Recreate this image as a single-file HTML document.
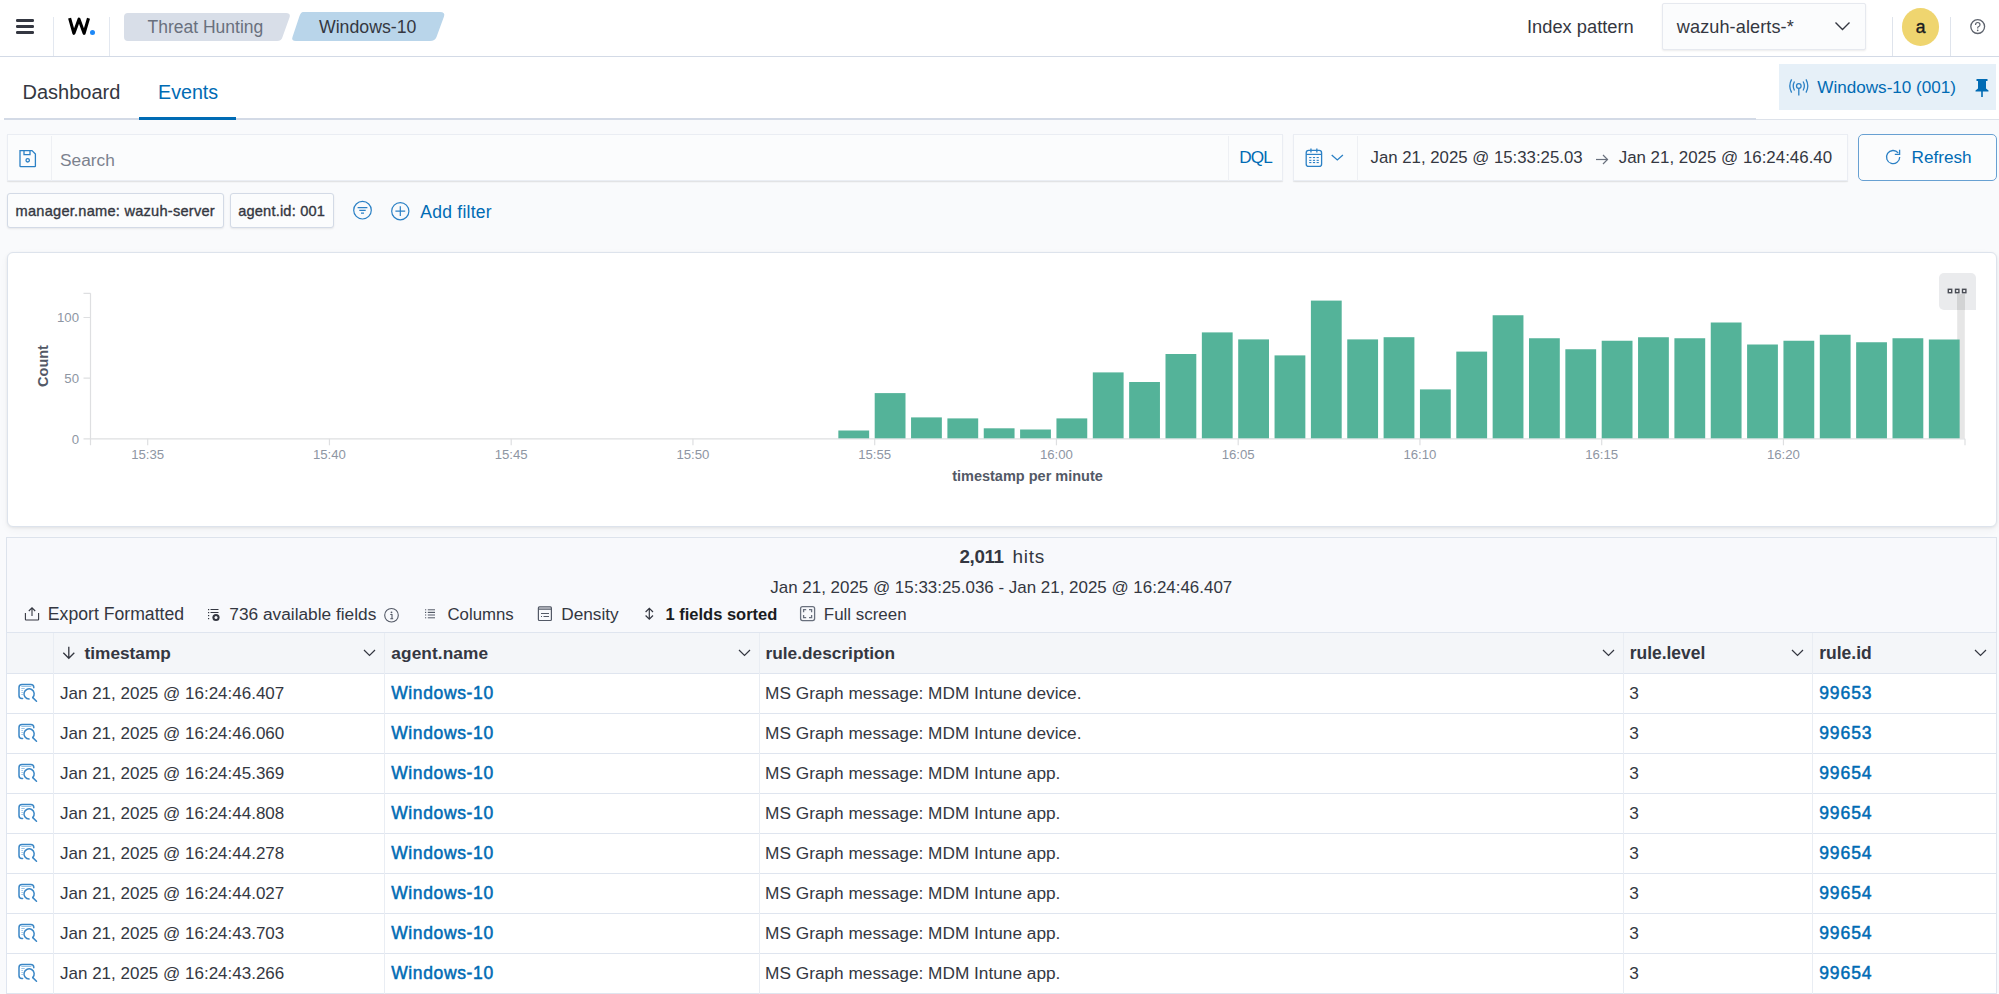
<!DOCTYPE html>
<html><head><meta charset="utf-8"><title>Wazuh - Threat Hunting</title>
<style>
html,body{margin:0;padding:0;}
body{width:1999px;height:994px;overflow:hidden;position:relative;background:#fff;font-family:"Liberation Sans",sans-serif;}
.t{position:absolute;white-space:nowrap;line-height:1;}
.b{position:absolute;}
svg.b{overflow:visible;}
</style></head><body>
<div class="b" style="left:0px;top:0px;width:1999px;height:56px;background:#fff;"></div>
<div class="b" style="left:0px;top:56px;width:1999px;height:1px;background:#d3dae6;"></div>
<div class="b" style="left:15.8px;top:19.3px;width:18.6px;height:2.4px;background:#343741;border-radius:1.2px;"></div>
<div class="b" style="left:15.8px;top:25.3px;width:18.6px;height:2.4px;background:#343741;border-radius:1.2px;"></div>
<div class="b" style="left:15.8px;top:31.2px;width:18.6px;height:2.4px;background:#343741;border-radius:1.2px;"></div>
<div class="b" style="left:53px;top:17px;width:1px;height:39px;background:#e3e8f0;"></div>
<div class="b" style="left:109px;top:17px;width:1px;height:39px;background:#e3e8f0;"></div>
<svg class="b" style="left:0;top:0" width="100" height="56"><path d="M69.6,18.2 L73.9,33.3 L79,19.2 L84.1,33.3 L88.5,18.2" fill="none" stroke="#000" stroke-width="3.1" stroke-linejoin="round"/></svg>
<div class="b" style="left:89.9px;top:29.6px;width:5.5px;height:5.5px;border-radius:50%;background:#1e88f7;"></div>
<svg class="b" style="left:0;top:0" width="460" height="56"><path d="M128,13 L286,13 Q291,13 289.5,17.5 L282.5,37 Q281.5,41 277,41 L128,41 Q124,41 124,37 L124,17 Q124,13 128,13 Z" fill="#d8dee8"/><path d="M303,12 L440,12 Q445.5,12 444,16.5 L436.5,37 Q435,41 430,41 L296,41 Q291,41 292.5,37 L299.5,16 Q301,12 303,12 Z" fill="#b9d5ea"/></svg>
<div class="t" style="left:147.50px;top:19.00px;font-size:17.5px;color:#69707d;">Threat Hunting</div>
<div class="t" style="left:319.00px;top:19.00px;font-size:17.7px;color:#343741;">Windows-10</div>
<div class="t" style="left:1527.00px;top:18.00px;font-size:18.3px;color:#343741;">Index pattern</div>
<div class="b" style="left:1662px;top:3.2px;width:203.5px;height:47px;background:#fbfcfd;border:1px solid #e6e9ef;box-shadow:0 1px 2px rgba(0,0,0,.08);box-sizing:border-box;border-radius:2px;"></div>
<div class="t" style="left:1676.80px;top:18.00px;font-size:18.1px;color:#343741;letter-spacing:0.1px;">wazuh-alerts-*</div>
<svg class="b" style="left:1830px;top:18px" width="26" height="18"><path d="M5.5,4.5 L12.5,11.5 L19.5,4.5" fill="none" stroke="#343741" stroke-width="1.4"/></svg>
<div class="b" style="left:1892px;top:17px;width:1.2px;height:39px;background:#dfe4ec;"></div>
<div class="b" style="left:1949.8px;top:17px;width:1.2px;height:39px;background:#dfe4ec;"></div>
<div class="b" style="left:1901.5px;top:7.8px;width:37.8px;height:37.8px;border-radius:50%;background:#efd56f;"></div>
<div class="t" style="left:1915.80px;top:19.00px;font-size:17.5px;color:#1a1c21;-webkit-text-stroke:0.4px #1a1c21;">a</div>
<svg class="b" style="left:1968px;top:17px" width="20" height="20"><circle cx="9.7" cy="9.6" r="6.9" fill="none" stroke="#5e636d" stroke-width="1.3"/><path d="M7.5,8 Q7.5,5.5 9.7,5.5 Q12,5.5 12,7.7 Q12,9.1 10.3,9.8 Q9.7,10.1 9.7,11.4" fill="none" stroke="#5e636d" stroke-width="1.2"/><circle cx="9.7" cy="13.4" r="0.8" fill="#5e636d"/></svg>
<div class="b" style="left:0px;top:57px;width:1999px;height:62px;background:#fff;"></div>
<div class="b" style="left:4px;top:118.2px;width:1752px;height:1.8px;background:#d3dae6;"></div>
<div class="b" style="left:1756px;top:118.8px;width:243px;height:1.2px;background:#dde2ea;"></div>
<div class="t" style="left:22.50px;top:82.00px;font-size:20px;color:#343741;">Dashboard</div>
<div class="t" style="left:158.00px;top:83.00px;font-size:19.7px;color:#006bb4;">Events</div>
<div class="b" style="left:139px;top:117px;width:97px;height:3px;background:#006bb4;"></div>
<div class="b" style="left:1779px;top:63.5px;width:217px;height:46.5px;background:#e6f0f8;"></div>
<svg class="b" style="left:1786px;top:76px" width="26" height="24"><g fill="none" stroke="#2b80c5" stroke-width="1.3"><circle cx="12.8" cy="10" r="2.3"/><path d="M12.8,12.3 V19.5"/><path d="M8.5,5.5 Q6,10 8.5,14.5"/><path d="M17.1,5.5 Q19.6,10 17.1,14.5"/><path d="M5.6,3.4 Q2,10 5.6,16.6"/><path d="M20,3.4 Q23.6,10 20,16.6"/></g></svg>
<div class="t" style="left:1817.30px;top:79.00px;font-size:17.1px;color:#006bb4;">Windows-10 (001)</div>
<svg class="b" style="left:1972px;top:76px" width="20" height="24"><path d="M4.5,3 H15.5 V5 H14 V12.5 L16.5,14.5 V15.5 H3.5 V14.5 L6,12.5 V5 H4.5 Z" fill="#006bb4"/><rect x="9.2" y="15" width="1.6" height="6" fill="#006bb4"/></svg>
<div class="b" style="left:0px;top:120px;width:1999px;height:874px;background:#f9fafc;"></div>
<div class="b" style="left:7px;top:134.3px;width:1275.5px;height:46.5px;background:#fbfcfd;border:1px solid #eaedf3;box-sizing:border-box;box-shadow:0 1px 1px rgba(0,0,0,.06),0 2px 2px -1px rgba(0,0,0,.05);"></div>
<div class="b" style="left:51px;top:135.5px;width:1px;height:45px;background:#eef0f4;"></div>
<svg class="b" style="left:17px;top:148px" width="22" height="22"><g fill="none" stroke="#2b80c5" stroke-width="1.3"><path d="M3,2.6 H15 L18.4,6 V18 Q18.4,18.6 17.8,18.6 H3.6 Q3,18.6 3,18 Z"/><path d="M7,2.6 V6.6 H13 V2.6"/><circle cx="10.7" cy="12.3" r="1.7"/></g></svg>
<div class="t" style="left:60.00px;top:152.00px;font-size:17.3px;color:#7b828e;">Search</div>
<div class="b" style="left:1227.5px;top:135.5px;width:1px;height:45px;background:#eef0f4;"></div>
<div class="t" style="left:1239.30px;top:149.00px;font-size:17.2px;color:#006bb4;letter-spacing:-0.9px;">DQL</div>
<div class="b" style="left:1293px;top:134.3px;width:555px;height:46.5px;background:#fbfcfd;border:1px solid #eaedf3;box-sizing:border-box;box-shadow:0 1px 1px rgba(0,0,0,.06),0 2px 2px -1px rgba(0,0,0,.05);"></div>
<div class="b" style="left:1356.5px;top:135.5px;width:1px;height:45px;background:#eef0f4;"></div>
<svg class="b" style="left:1302px;top:146px" width="24" height="24"><g fill="#2b80c5"><rect x="4.2" y="4.4" width="15.4" height="16" rx="2.5" fill="none" stroke="#2b80c5" stroke-width="1.3"/><rect x="4.2" y="7.8" width="15.4" height="1.2"/><rect x="8.3" y="2.5" width="1.3" height="4"/><rect x="14.2" y="2.5" width="1.3" height="4"/><rect x="7.2" y="11" width="2.2" height="1.1"/><rect x="10.9" y="11" width="2.2" height="1.1"/><rect x="14.6" y="11" width="2.2" height="1.1"/><rect x="7.2" y="13.8" width="2.2" height="1.1"/><rect x="10.9" y="13.8" width="2.2" height="1.1"/><rect x="14.6" y="13.8" width="2.2" height="1.1"/><rect x="7.2" y="16" width="2.2" height="1.1"/><rect x="10.9" y="16" width="2.2" height="1.1"/><rect x="14.6" y="16" width="2.2" height="1.1"/></g></svg>
<svg class="b" style="left:1328px;top:150px" width="18" height="14"><path d="M3.7,5 L9.3,10 L14.9,5" fill="none" stroke="#2b80c5" stroke-width="1.3"/></svg>
<div class="t" style="left:1370.50px;top:150.00px;font-size:16.8px;color:#343741;">Jan 21, 2025 @ 15:33:25.03</div>
<svg class="b" style="left:1593px;top:152px" width="18" height="16"><g fill="none" stroke="#69707d" stroke-width="1.2"><path d="M3,7.5 H14.5"/><path d="M10,3 L14.5,7.5 L10,12"/></g></svg>
<div class="t" style="left:1618.70px;top:150.00px;font-size:16.9px;color:#343741;">Jan 21, 2025 @ 16:24:46.40</div>
<div class="b" style="left:1857.5px;top:134.3px;width:139px;height:47.2px;border:1.8px solid #68a0d2;border-radius:5px;box-sizing:border-box;background:#fbfcfd;"></div>
<svg class="b" style="left:1882px;top:146px" width="22" height="22"><g fill="none" stroke="#2b80c5" stroke-width="1.3"><path d="M16.2,6.9 A6.6,6.6 0 1 0 17.7,11"/><path d="M17.6,3.7 V8.4 H12.8"/></g></svg>
<div class="t" style="left:1911.50px;top:149.00px;font-size:17.2px;color:#006bb4;">Refresh</div>
<div class="b" style="left:7px;top:193.3px;width:217px;height:34.7px;background:#fbfcfd;border:1px solid #d3dae6;border-radius:3px;box-sizing:border-box;box-shadow:0 1px 2px rgba(0,0,0,.08);"></div>
<div class="t" style="left:15.60px;top:204.00px;font-size:14.6px;color:#343741;letter-spacing:0.24px;-webkit-text-stroke:0.35px #343741;">manager.name: wazuh-server</div>
<div class="b" style="left:229.5px;top:193.3px;width:104.5px;height:34.7px;background:#fbfcfd;border:1px solid #d3dae6;border-radius:3px;box-sizing:border-box;box-shadow:0 1px 2px rgba(0,0,0,.08);"></div>
<div class="t" style="left:238.20px;top:204.00px;font-size:14.6px;color:#343741;letter-spacing:0.19px;-webkit-text-stroke:0.35px #343741;">agent.id: 001</div>
<svg class="b" style="left:351px;top:199px" width="24" height="24"><g fill="none" stroke="#2b80c5" stroke-width="1.2"><circle cx="11.5" cy="11.2" r="8.8"/><path d="M6.6,8.6 H16.4 M8.3,11.4 H14.7 M10,14.2 H13"/></g></svg>
<svg class="b" style="left:389px;top:200px" width="24" height="24"><g fill="none" stroke="#2b80c5" stroke-width="1.2"><circle cx="11.3" cy="11.2" r="8.6"/><path d="M6.4,11.2 H16.2 M11.3,6.3 V16.1"/></g></svg>
<div class="t" style="left:420.20px;top:204.00px;font-size:17.5px;color:#006bb4;letter-spacing:0.27px;">Add filter</div>
<div class="b" style="left:6.5px;top:252px;width:1990px;height:274.5px;background:#fff;border:1px solid #dde3ec;border-radius:6px;box-sizing:border-box;box-shadow:0 1px 3px rgba(0,0,0,.07),0 3px 8px rgba(0,0,0,.04);"></div>
<svg class="b" style="left:0;top:0" width="1999" height="994"><g stroke="#dedfe1" stroke-width="1.2" fill="none"><path d="M90.5,293.3 V445.3 M83.5,293.3 H90.5 M83.5,317.5 H90.5 M83.5,378.1 H90.5 M83.5,438.8 H90.5 M90.5,438.8 H1965"/><path d="M147.70,438.8 V445.3"/><path d="M329.45,438.8 V445.3"/><path d="M511.20,438.8 V445.3"/><path d="M692.95,438.8 V445.3"/><path d="M874.70,438.8 V445.3"/><path d="M1056.45,438.8 V445.3"/><path d="M1238.20,438.8 V445.3"/><path d="M1419.95,438.8 V445.3"/><path d="M1601.70,438.8 V445.3"/><path d="M1783.45,438.8 V445.3"/><path d="M1965,438.8 V445.3"/></g><rect x="1957.2" y="309.5" width="7.6" height="129" fill="#e6e6e6"/><g fill="#54b399"><rect x="838.35" y="430.5" width="30.8" height="7.80"/><rect x="874.70" y="393.1" width="30.8" height="45.20"/><rect x="911.05" y="417.4" width="30.8" height="20.90"/><rect x="947.40" y="418.4" width="30.8" height="19.90"/><rect x="983.75" y="428.3" width="30.8" height="10.00"/><rect x="1020.10" y="429.5" width="30.8" height="8.80"/><rect x="1056.45" y="418.4" width="30.8" height="19.90"/><rect x="1092.80" y="372.4" width="30.8" height="65.90"/><rect x="1129.15" y="382" width="30.8" height="56.30"/><rect x="1165.50" y="354" width="30.8" height="84.30"/><rect x="1201.85" y="332.4" width="30.8" height="105.90"/><rect x="1238.20" y="339.4" width="30.8" height="98.90"/><rect x="1274.55" y="355.4" width="30.8" height="82.90"/><rect x="1310.90" y="300.6" width="30.8" height="137.70"/><rect x="1347.25" y="339.4" width="30.8" height="98.90"/><rect x="1383.60" y="337.2" width="30.8" height="101.10"/><rect x="1419.95" y="389.4" width="30.8" height="48.90"/><rect x="1456.30" y="351.6" width="30.8" height="86.70"/><rect x="1492.65" y="315.25" width="30.8" height="123.05"/><rect x="1529.00" y="338.25" width="30.8" height="100.05"/><rect x="1565.35" y="349.25" width="30.8" height="89.05"/><rect x="1601.70" y="340.75" width="30.8" height="97.55"/><rect x="1638.05" y="337.25" width="30.8" height="101.05"/><rect x="1674.40" y="338.25" width="30.8" height="100.05"/><rect x="1710.75" y="322.5" width="30.8" height="115.80"/><rect x="1747.10" y="344.5" width="30.8" height="93.80"/><rect x="1783.45" y="340.75" width="30.8" height="97.55"/><rect x="1819.80" y="334.75" width="30.8" height="103.55"/><rect x="1856.15" y="342.25" width="30.8" height="96.05"/><rect x="1892.50" y="338.25" width="30.8" height="100.05"/><rect x="1928.85" y="339.5" width="30.8" height="98.80"/></g><g font-family="Liberation Sans" font-size="13.2" fill="#8e96a3"><text x="147.70" y="458.7" text-anchor="middle">15:35</text><text x="329.45" y="458.7" text-anchor="middle">15:40</text><text x="511.20" y="458.7" text-anchor="middle">15:45</text><text x="692.95" y="458.7" text-anchor="middle">15:50</text><text x="874.70" y="458.7" text-anchor="middle">15:55</text><text x="1056.45" y="458.7" text-anchor="middle">16:00</text><text x="1238.20" y="458.7" text-anchor="middle">16:05</text><text x="1419.95" y="458.7" text-anchor="middle">16:10</text><text x="1601.70" y="458.7" text-anchor="middle">16:15</text><text x="1783.45" y="458.7" text-anchor="middle">16:20</text><text x="79" y="322.4" text-anchor="end">100</text><text x="79" y="383" text-anchor="end">50</text><text x="79" y="443.6" text-anchor="end">0</text></g><text x="1027.5" y="480.7" text-anchor="middle" font-family="Liberation Sans" font-weight="700" font-size="14.5" fill="#535966">timestamp per minute</text><text transform="translate(47.7,366) rotate(-90)" text-anchor="middle" font-family="Liberation Sans" font-weight="700" font-size="14.5" fill="#535966">Count</text></svg>
<div class="b" style="left:1938.5px;top:272.5px;width:37.5px;height:37px;background:#eaebed;border-radius:5px 5px 0 5px;"></div>
<div class="b" style="left:1957.2px;top:294px;width:7.6px;height:15.5px;background:rgba(0,0,0,0.1);"></div>
<svg class="b" style="left:1944px;top:285px" width="26" height="12"><g fill="none" stroke="#4a4d55" stroke-width="1.4"><rect x="4.3" y="4.3" width="3.4" height="3.4"/><rect x="11.5" y="4.3" width="3.4" height="3.4"/><rect x="18.5" y="4.3" width="3.4" height="3.4"/></g></svg>
<div class="b" style="left:6.0px;top:536.8px;width:1990.5px;height:457.2px;background:#f8f9fc;border:1px solid #dde3ec;border-bottom:none;box-sizing:border-box;"></div>
<div class="t" style="left:959.50px;top:548.00px;font-size:18.8px;color:#343741;font-weight:700;letter-spacing:-0.35px;">2,011</div>
<div class="t" style="left:1012.60px;top:547.00px;font-size:19px;color:#343741;letter-spacing:0.7px;">hits</div>
<div class="t" style="left:770.30px;top:580.00px;font-size:16.95px;color:#343741;">Jan 21, 2025 @ 15:33:25.036 - Jan 21, 2025 @ 16:24:46.407</div>
<svg class="b" style="left:22px;top:604px" width="20" height="20"><g fill="none" stroke="#343741" stroke-width="1.1"><path d="M3.4,9 V15.4 Q3.4,16 4,16 H16 Q16.6,16 16.6,15.4 V9"/><path d="M10,4 V12 M6.8,7 L10,3.8 L13.2,7"/></g></svg>
<div class="t" style="left:47.80px;top:606.00px;font-size:17.65px;color:#343741;">Export Formatted</div>
<svg class="b" style="left:206px;top:606px" width="18" height="18"><g fill="#343741"><rect x="2" y="3" width="1.2" height="1.2"/><rect x="4.5" y="3" width="8" height="1"/><rect x="2" y="6" width="1.2" height="1.2"/><rect x="4.5" y="6" width="8" height="1"/><rect x="2" y="9" width="1.2" height="1.2"/><rect x="2" y="12" width="1.2" height="1.2"/><circle cx="10" cy="11.5" r="3.6"/></g><circle cx="10" cy="11.5" r="1.5" fill="#f8f9fc"/></svg>
<div class="t" style="left:229.30px;top:606.00px;font-size:17.3px;color:#343741;">736 available fields</div>
<svg class="b" style="left:382px;top:606px" width="20" height="20"><g fill="none" stroke="#535966" stroke-width="1.1"><circle cx="9.5" cy="9.25" r="6.8"/></g><circle cx="9.5" cy="6.3" r="0.9" fill="#535966"/><path d="M8.3,8.5 H10 V12.8 M8.3,12.8 H11.2" fill="none" stroke="#535966" stroke-width="1.1"/></svg>
<svg class="b" style="left:424px;top:606px" width="16" height="16"><g fill="#535966"><rect x="1" y="3.3" width="1.2" height="1"/><rect x="3.8" y="3.3" width="7.2" height="1"/><rect x="1" y="5.8" width="1.2" height="1.2"/><rect x="3.8" y="5.8" width="7.2" height="1.2"/><rect x="1" y="8.5" width="1.2" height="1"/><rect x="3.8" y="8.5" width="7.2" height="1"/><rect x="1" y="11.3" width="1.2" height="1"/><rect x="3.8" y="11.3" width="7.2" height="1"/></g></svg>
<div class="t" style="left:447.50px;top:607.00px;font-size:16.8px;color:#343741;">Columns</div>
<svg class="b" style="left:534px;top:603px" width="20" height="20"><g fill="none" stroke="#535966" stroke-width="1.2"><rect x="4.4" y="3.9" width="13" height="13.6" rx="1"/><path d="M4.4,6.2 H17.4 M7,10.5 H15 M7,13.5 H8 M9.5,13.5 H15"/></g></svg>
<div class="t" style="left:561.20px;top:606.00px;font-size:17.25px;color:#343741;">Density</div>
<svg class="b" style="left:641px;top:604px" width="16" height="18"><g fill="none" stroke="#343741" stroke-width="1.2"><path d="M8.3,4.3 V15.2 M4.6,8 L8.3,4.3 L12,8 M4.6,11.5 L8.3,15.2 L12,11.5"/></g></svg>
<div class="t" style="left:665.50px;top:606.00px;font-size:16.5px;color:#1a1c21;font-weight:700;">1 fields sorted</div>
<svg class="b" style="left:797px;top:603px" width="20" height="20"><g fill="none" stroke="#69707d" stroke-width="1.3"><rect x="3.6" y="3.6" width="14" height="14" rx="2"/><path d="M6.6,9.2 V6.6 H9.2 M12,6.6 H14.6 V9.2 M14.6,12 V14.6 H12 M9.2,14.6 H6.6 V12"/></g></svg>
<div class="t" style="left:823.80px;top:607.00px;font-size:16.95px;color:#343741;">Full screen</div>
<div class="b" style="left:6.0px;top:632.5px;width:1989.5px;height:40.5px;background:#f4f6f9;"></div>
<div class="b" style="left:6.0px;top:672.5px;width:1989.5px;height:321.5px;background:#fff;"></div>
<div class="b" style="left:6.0px;top:632.2px;width:1989.5px;height:1.3px;background:#dfe5ef;"></div>
<div class="b" style="left:6.0px;top:672.5px;width:1989.5px;height:1.3px;background:#dfe5ef;"></div>
<div class="b" style="left:6.0px;top:712.5px;width:1989.5px;height:1.3px;background:#dfe5ef;"></div>
<div class="b" style="left:6.0px;top:752.5px;width:1989.5px;height:1.3px;background:#dfe5ef;"></div>
<div class="b" style="left:6.0px;top:792.5px;width:1989.5px;height:1.3px;background:#dfe5ef;"></div>
<div class="b" style="left:6.0px;top:832.5px;width:1989.5px;height:1.3px;background:#dfe5ef;"></div>
<div class="b" style="left:6.0px;top:872.5px;width:1989.5px;height:1.3px;background:#dfe5ef;"></div>
<div class="b" style="left:6.0px;top:912.5px;width:1989.5px;height:1.3px;background:#dfe5ef;"></div>
<div class="b" style="left:6.0px;top:952.5px;width:1989.5px;height:1.3px;background:#dfe5ef;"></div>
<div class="b" style="left:6.0px;top:992.5px;width:1989.5px;height:1.3px;background:#dfe5ef;"></div>
<div class="b" style="left:6.0px;top:632.5px;width:1.2px;height:361.5px;background:#dfe5ef;"></div>
<div class="b" style="left:52.9px;top:632.5px;width:1.2px;height:361.5px;background:#e9edf3;"></div>
<div class="b" style="left:383.8px;top:632.5px;width:1.2px;height:361.5px;background:#e9edf3;"></div>
<div class="b" style="left:758.7px;top:632.5px;width:1.2px;height:361.5px;background:#e9edf3;"></div>
<div class="b" style="left:1622.5px;top:632.5px;width:1.2px;height:361.5px;background:#e9edf3;"></div>
<div class="b" style="left:1811.6px;top:632.5px;width:1.2px;height:361.5px;background:#e9edf3;"></div>
<div class="b" style="left:1995.5px;top:632.5px;width:1.2px;height:361.5px;background:#dfe5ef;"></div>
<svg class="b" style="left:58px;top:642px" width="22" height="22"><g fill="none" stroke="#343741" stroke-width="1.3"><path d="M10.8,4.8 V16.3 M5.3,10.8 L10.8,16.3 L16.3,10.8"/></g></svg>
<div class="t" style="left:84.50px;top:645.00px;font-size:17.25px;color:#343741;font-weight:700;">timestamp</div>
<div class="t" style="left:391.30px;top:645.00px;font-size:17.25px;color:#343741;font-weight:700;letter-spacing:0.1px;">agent.name</div>
<div class="t" style="left:765.50px;top:645.00px;font-size:17.3px;color:#343741;font-weight:700;">rule.description</div>
<div class="t" style="left:1629.70px;top:645.00px;font-size:17.45px;color:#343741;font-weight:700;">rule.level</div>
<div class="t" style="left:1819.20px;top:645.00px;font-size:17.5px;color:#343741;font-weight:700;">rule.id</div>
<svg class="b" style="left:362px;top:646px" width="16" height="14"><path d="M2,4 L7.5,9.5 L13,4" fill="none" stroke="#343741" stroke-width="1.2"/></svg>
<svg class="b" style="left:736.7px;top:646px" width="16" height="14"><path d="M2,4 L7.5,9.5 L13,4" fill="none" stroke="#343741" stroke-width="1.2"/></svg>
<svg class="b" style="left:1600.6px;top:646px" width="16" height="14"><path d="M2,4 L7.5,9.5 L13,4" fill="none" stroke="#343741" stroke-width="1.2"/></svg>
<svg class="b" style="left:1789.7px;top:646px" width="16" height="14"><path d="M2,4 L7.5,9.5 L13,4" fill="none" stroke="#343741" stroke-width="1.2"/></svg>
<svg class="b" style="left:1973px;top:646px" width="16" height="14"><path d="M2,4 L7.5,9.5 L13,4" fill="none" stroke="#343741" stroke-width="1.2"/></svg>
<svg class="b" style="left:16px;top:681px" width="24" height="24"><g fill="none" stroke="#3b87c6" stroke-width="1.5" stroke-linecap="round"><path d="M6.6,17.4 H6 Q3,17.4 3,14.4 V6.4 Q3,3.4 6,3.4 H14.8 Q17.8,3.4 17.8,6.4 V6.8"/><path d="M13.1,18 A5.1,5.1 0 1 1 16.7,16.5"/><path d="M16.8,16.6 L20.5,20.3"/></g><g fill="#8dbde3"><rect x="5.3" y="5" width="10" height="0.9"/><rect x="5.3" y="7" width="3.4" height="0.9"/><rect x="5.3" y="9.1" width="1.8" height="0.8"/><rect x="5.3" y="11.1" width="1.8" height="0.8"/><rect x="5.3" y="13.1" width="1.8" height="0.8"/></g></svg>
<div class="t" style="left:60.00px;top:685.00px;font-size:17.0px;color:#343741;">Jan 21, 2025 @ 16:24:46.407</div>
<div class="t" style="left:391.20px;top:685.00px;font-size:17.5px;color:#006bb4;letter-spacing:0.63px;-webkit-text-stroke:0.5px #006bb4;">Windows-10</div>
<div class="t" style="left:765.10px;top:685.00px;font-size:17.26px;color:#343741;">MS Graph message: MDM Intune device.</div>
<div class="t" style="left:1629.20px;top:685.00px;font-size:17.3px;color:#343741;">3</div>
<div class="t" style="left:1819.20px;top:685.00px;font-size:17.5px;color:#006bb4;letter-spacing:0.92px;-webkit-text-stroke:0.5px #006bb4;">99653</div>
<svg class="b" style="left:16px;top:721px" width="24" height="24"><g fill="none" stroke="#3b87c6" stroke-width="1.5" stroke-linecap="round"><path d="M6.6,17.4 H6 Q3,17.4 3,14.4 V6.4 Q3,3.4 6,3.4 H14.8 Q17.8,3.4 17.8,6.4 V6.8"/><path d="M13.1,18 A5.1,5.1 0 1 1 16.7,16.5"/><path d="M16.8,16.6 L20.5,20.3"/></g><g fill="#8dbde3"><rect x="5.3" y="5" width="10" height="0.9"/><rect x="5.3" y="7" width="3.4" height="0.9"/><rect x="5.3" y="9.1" width="1.8" height="0.8"/><rect x="5.3" y="11.1" width="1.8" height="0.8"/><rect x="5.3" y="13.1" width="1.8" height="0.8"/></g></svg>
<div class="t" style="left:60.00px;top:725.00px;font-size:17.0px;color:#343741;">Jan 21, 2025 @ 16:24:46.060</div>
<div class="t" style="left:391.20px;top:725.00px;font-size:17.5px;color:#006bb4;letter-spacing:0.63px;-webkit-text-stroke:0.5px #006bb4;">Windows-10</div>
<div class="t" style="left:765.10px;top:725.00px;font-size:17.26px;color:#343741;">MS Graph message: MDM Intune device.</div>
<div class="t" style="left:1629.20px;top:725.00px;font-size:17.3px;color:#343741;">3</div>
<div class="t" style="left:1819.20px;top:725.00px;font-size:17.5px;color:#006bb4;letter-spacing:0.92px;-webkit-text-stroke:0.5px #006bb4;">99653</div>
<svg class="b" style="left:16px;top:761px" width="24" height="24"><g fill="none" stroke="#3b87c6" stroke-width="1.5" stroke-linecap="round"><path d="M6.6,17.4 H6 Q3,17.4 3,14.4 V6.4 Q3,3.4 6,3.4 H14.8 Q17.8,3.4 17.8,6.4 V6.8"/><path d="M13.1,18 A5.1,5.1 0 1 1 16.7,16.5"/><path d="M16.8,16.6 L20.5,20.3"/></g><g fill="#8dbde3"><rect x="5.3" y="5" width="10" height="0.9"/><rect x="5.3" y="7" width="3.4" height="0.9"/><rect x="5.3" y="9.1" width="1.8" height="0.8"/><rect x="5.3" y="11.1" width="1.8" height="0.8"/><rect x="5.3" y="13.1" width="1.8" height="0.8"/></g></svg>
<div class="t" style="left:60.00px;top:765.00px;font-size:17.0px;color:#343741;">Jan 21, 2025 @ 16:24:45.369</div>
<div class="t" style="left:391.20px;top:765.00px;font-size:17.5px;color:#006bb4;letter-spacing:0.63px;-webkit-text-stroke:0.5px #006bb4;">Windows-10</div>
<div class="t" style="left:765.10px;top:765.00px;font-size:17.26px;color:#343741;">MS Graph message: MDM Intune app.</div>
<div class="t" style="left:1629.20px;top:765.00px;font-size:17.3px;color:#343741;">3</div>
<div class="t" style="left:1819.20px;top:765.00px;font-size:17.5px;color:#006bb4;letter-spacing:0.92px;-webkit-text-stroke:0.5px #006bb4;">99654</div>
<svg class="b" style="left:16px;top:801px" width="24" height="24"><g fill="none" stroke="#3b87c6" stroke-width="1.5" stroke-linecap="round"><path d="M6.6,17.4 H6 Q3,17.4 3,14.4 V6.4 Q3,3.4 6,3.4 H14.8 Q17.8,3.4 17.8,6.4 V6.8"/><path d="M13.1,18 A5.1,5.1 0 1 1 16.7,16.5"/><path d="M16.8,16.6 L20.5,20.3"/></g><g fill="#8dbde3"><rect x="5.3" y="5" width="10" height="0.9"/><rect x="5.3" y="7" width="3.4" height="0.9"/><rect x="5.3" y="9.1" width="1.8" height="0.8"/><rect x="5.3" y="11.1" width="1.8" height="0.8"/><rect x="5.3" y="13.1" width="1.8" height="0.8"/></g></svg>
<div class="t" style="left:60.00px;top:805.00px;font-size:17.0px;color:#343741;">Jan 21, 2025 @ 16:24:44.808</div>
<div class="t" style="left:391.20px;top:805.00px;font-size:17.5px;color:#006bb4;letter-spacing:0.63px;-webkit-text-stroke:0.5px #006bb4;">Windows-10</div>
<div class="t" style="left:765.10px;top:805.00px;font-size:17.26px;color:#343741;">MS Graph message: MDM Intune app.</div>
<div class="t" style="left:1629.20px;top:805.00px;font-size:17.3px;color:#343741;">3</div>
<div class="t" style="left:1819.20px;top:805.00px;font-size:17.5px;color:#006bb4;letter-spacing:0.92px;-webkit-text-stroke:0.5px #006bb4;">99654</div>
<svg class="b" style="left:16px;top:841px" width="24" height="24"><g fill="none" stroke="#3b87c6" stroke-width="1.5" stroke-linecap="round"><path d="M6.6,17.4 H6 Q3,17.4 3,14.4 V6.4 Q3,3.4 6,3.4 H14.8 Q17.8,3.4 17.8,6.4 V6.8"/><path d="M13.1,18 A5.1,5.1 0 1 1 16.7,16.5"/><path d="M16.8,16.6 L20.5,20.3"/></g><g fill="#8dbde3"><rect x="5.3" y="5" width="10" height="0.9"/><rect x="5.3" y="7" width="3.4" height="0.9"/><rect x="5.3" y="9.1" width="1.8" height="0.8"/><rect x="5.3" y="11.1" width="1.8" height="0.8"/><rect x="5.3" y="13.1" width="1.8" height="0.8"/></g></svg>
<div class="t" style="left:60.00px;top:845.00px;font-size:17.0px;color:#343741;">Jan 21, 2025 @ 16:24:44.278</div>
<div class="t" style="left:391.20px;top:845.00px;font-size:17.5px;color:#006bb4;letter-spacing:0.63px;-webkit-text-stroke:0.5px #006bb4;">Windows-10</div>
<div class="t" style="left:765.10px;top:845.00px;font-size:17.26px;color:#343741;">MS Graph message: MDM Intune app.</div>
<div class="t" style="left:1629.20px;top:845.00px;font-size:17.3px;color:#343741;">3</div>
<div class="t" style="left:1819.20px;top:845.00px;font-size:17.5px;color:#006bb4;letter-spacing:0.92px;-webkit-text-stroke:0.5px #006bb4;">99654</div>
<svg class="b" style="left:16px;top:881px" width="24" height="24"><g fill="none" stroke="#3b87c6" stroke-width="1.5" stroke-linecap="round"><path d="M6.6,17.4 H6 Q3,17.4 3,14.4 V6.4 Q3,3.4 6,3.4 H14.8 Q17.8,3.4 17.8,6.4 V6.8"/><path d="M13.1,18 A5.1,5.1 0 1 1 16.7,16.5"/><path d="M16.8,16.6 L20.5,20.3"/></g><g fill="#8dbde3"><rect x="5.3" y="5" width="10" height="0.9"/><rect x="5.3" y="7" width="3.4" height="0.9"/><rect x="5.3" y="9.1" width="1.8" height="0.8"/><rect x="5.3" y="11.1" width="1.8" height="0.8"/><rect x="5.3" y="13.1" width="1.8" height="0.8"/></g></svg>
<div class="t" style="left:60.00px;top:885.00px;font-size:17.0px;color:#343741;">Jan 21, 2025 @ 16:24:44.027</div>
<div class="t" style="left:391.20px;top:885.00px;font-size:17.5px;color:#006bb4;letter-spacing:0.63px;-webkit-text-stroke:0.5px #006bb4;">Windows-10</div>
<div class="t" style="left:765.10px;top:885.00px;font-size:17.26px;color:#343741;">MS Graph message: MDM Intune app.</div>
<div class="t" style="left:1629.20px;top:885.00px;font-size:17.3px;color:#343741;">3</div>
<div class="t" style="left:1819.20px;top:885.00px;font-size:17.5px;color:#006bb4;letter-spacing:0.92px;-webkit-text-stroke:0.5px #006bb4;">99654</div>
<svg class="b" style="left:16px;top:921px" width="24" height="24"><g fill="none" stroke="#3b87c6" stroke-width="1.5" stroke-linecap="round"><path d="M6.6,17.4 H6 Q3,17.4 3,14.4 V6.4 Q3,3.4 6,3.4 H14.8 Q17.8,3.4 17.8,6.4 V6.8"/><path d="M13.1,18 A5.1,5.1 0 1 1 16.7,16.5"/><path d="M16.8,16.6 L20.5,20.3"/></g><g fill="#8dbde3"><rect x="5.3" y="5" width="10" height="0.9"/><rect x="5.3" y="7" width="3.4" height="0.9"/><rect x="5.3" y="9.1" width="1.8" height="0.8"/><rect x="5.3" y="11.1" width="1.8" height="0.8"/><rect x="5.3" y="13.1" width="1.8" height="0.8"/></g></svg>
<div class="t" style="left:60.00px;top:925.00px;font-size:17.0px;color:#343741;">Jan 21, 2025 @ 16:24:43.703</div>
<div class="t" style="left:391.20px;top:925.00px;font-size:17.5px;color:#006bb4;letter-spacing:0.63px;-webkit-text-stroke:0.5px #006bb4;">Windows-10</div>
<div class="t" style="left:765.10px;top:925.00px;font-size:17.26px;color:#343741;">MS Graph message: MDM Intune app.</div>
<div class="t" style="left:1629.20px;top:925.00px;font-size:17.3px;color:#343741;">3</div>
<div class="t" style="left:1819.20px;top:925.00px;font-size:17.5px;color:#006bb4;letter-spacing:0.92px;-webkit-text-stroke:0.5px #006bb4;">99654</div>
<svg class="b" style="left:16px;top:961px" width="24" height="24"><g fill="none" stroke="#3b87c6" stroke-width="1.5" stroke-linecap="round"><path d="M6.6,17.4 H6 Q3,17.4 3,14.4 V6.4 Q3,3.4 6,3.4 H14.8 Q17.8,3.4 17.8,6.4 V6.8"/><path d="M13.1,18 A5.1,5.1 0 1 1 16.7,16.5"/><path d="M16.8,16.6 L20.5,20.3"/></g><g fill="#8dbde3"><rect x="5.3" y="5" width="10" height="0.9"/><rect x="5.3" y="7" width="3.4" height="0.9"/><rect x="5.3" y="9.1" width="1.8" height="0.8"/><rect x="5.3" y="11.1" width="1.8" height="0.8"/><rect x="5.3" y="13.1" width="1.8" height="0.8"/></g></svg>
<div class="t" style="left:60.00px;top:965.00px;font-size:17.0px;color:#343741;">Jan 21, 2025 @ 16:24:43.266</div>
<div class="t" style="left:391.20px;top:965.00px;font-size:17.5px;color:#006bb4;letter-spacing:0.63px;-webkit-text-stroke:0.5px #006bb4;">Windows-10</div>
<div class="t" style="left:765.10px;top:965.00px;font-size:17.26px;color:#343741;">MS Graph message: MDM Intune app.</div>
<div class="t" style="left:1629.20px;top:965.00px;font-size:17.3px;color:#343741;">3</div>
<div class="t" style="left:1819.20px;top:965.00px;font-size:17.5px;color:#006bb4;letter-spacing:0.92px;-webkit-text-stroke:0.5px #006bb4;">99654</div>
</body></html>
